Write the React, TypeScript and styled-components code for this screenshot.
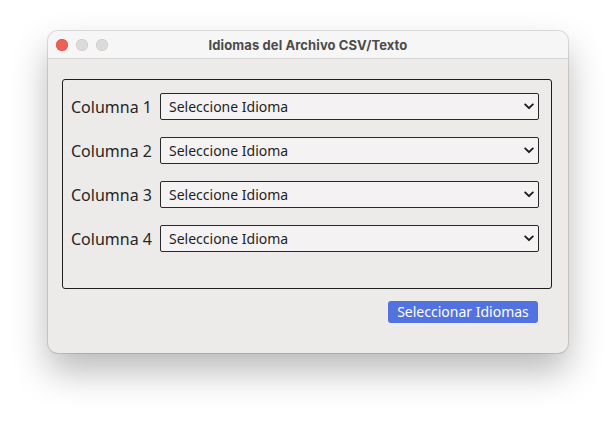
import { createGlobalStyle } from "styled-components";
import styled from "styled-components";

const GlobalStyle = createGlobalStyle`
  html, body {
    margin: 0;
    padding: 0;
    background: #ffffff;
  }
  * {
    box-sizing: border-box;
  }
`;

const Desktop = styled.div`
  width: 616px;
  height: 421px;
  padding: 31px 0 0 48px;
`;

const Window = styled.div`
  width: 520px;
  height: 322px;
  border-radius: 10px;
  background: #ecebea;
  overflow: hidden;
  box-shadow: 0 0 0 1px rgba(0, 0, 0, 0.12), 0 18px 36px rgba(0, 0, 0, 0.28);
  display: flex;
  flex-direction: column;
`;

const TitleBar = styled.div`
  position: relative;
  height: 28px;
  flex: none;
  background: #f7f6f6;
  border-bottom: 1px solid #d6d5d4;
  display: flex;
  align-items: center;
  justify-content: center;
`;

const Lights = styled.div`
  position: absolute;
  left: 8px;
  top: 8px;
  display: flex;
  gap: 8px;
`;

const Light = styled.span<{ $color: string; $edge: string }>`
  width: 12px;
  height: 12px;
  border-radius: 50%;
  background: ${(p) => p.$color};
  box-shadow: inset 0 0 0 0.5px ${(p) => p.$edge};
`;

const Title = styled.div`
  font-family: "Inter", "Liberation Sans", sans-serif;
  font-weight: 700;
  font-size: 13px;
  color: #4b4b4b;
  letter-spacing: 0.1px;
`;

const Body = styled.div`
  padding: 20px 16px 0 14px;
  display: flex;
  flex-direction: column;
`;

const Group = styled.div`
  width: 490px;
  height: 210px;
  border: 1px solid #1e1e1e;
  border-radius: 3px;
  padding: 13px 12px 0 8px;
  display: flex;
  flex-direction: column;
  gap: 17px;
`;

const Row = styled.div`
  display: flex;
  align-items: center;
  height: 27px;
`;

const Label = styled.label`
  width: 89px;
  flex: none;
  font-family: "Noto Sans", "Open Sans", sans-serif;
  font-size: 16px;
  color: #262626;
`;

const SelectWrap = styled.div`
  position: relative;
  flex: 1;
  height: 27px;
`;

const Select = styled.select`
  appearance: none;
  -webkit-appearance: none;
  width: 100%;
  height: 100%;
  border: 1px solid #2a2a2a;
  border-radius: 2px;
  background: #f4f2f2;
  padding: 0 0 1px 8px;
  font-family: "Noto Sans", "Open Sans", sans-serif;
  font-size: 14px;
  color: #1f1f1f;
  outline: none;
`;

const Chevron = styled.svg`
  position: absolute;
  right: 5px;
  top: 10px;
  pointer-events: none;
`;

const Footer = styled.div`
  display: flex;
  justify-content: flex-end;
  padding: 12px 14px 0 0;
`;

const Button = styled.button`
  width: 150px;
  height: 22px;
  border: none;
  border-radius: 3px;
  background: #5272e0;
  color: #ffffff;
  font-family: "Noto Sans", "Open Sans", sans-serif;
  font-size: 14px;
  padding: 0 0 1px;
`;

const columns = ["Columna 1", "Columna 2", "Columna 3", "Columna 4"];

export default function App() {
  return (
    <>
      <GlobalStyle />
      <Desktop>
        <Window>
          <TitleBar>
            <Lights>
              <Light $color="#ed5f57" $edge="#d44b43" />
              <Light $color="#dcdbda" $edge="#c9c8c7" />
              <Light $color="#dcdbda" $edge="#c9c8c7" />
            </Lights>
            <Title>Idiomas del Archivo CSV/Texto</Title>
          </TitleBar>
          <Body>
            <Group>
              {columns.map((c) => (
                <Row key={c}>
                  <Label>{c}</Label>
                  <SelectWrap>
                    <Select defaultValue="">
                      <option value="">Seleccione Idioma</option>
                    </Select>
                    <Chevron width="10" height="7" viewBox="0 0 10 7">
                      <path d="M1.2 1.4 L5 5.2 L8.8 1.4" fill="none" stroke="#1c1c1c" strokeWidth="1.9" strokeLinecap="round" strokeLinejoin="round" />
                    </Chevron>
                  </SelectWrap>
                </Row>
              ))}
            </Group>
            <Footer>
              <Button>Seleccionar Idiomas</Button>
            </Footer>
          </Body>
        </Window>
      </Desktop>
    </>
  );
}
